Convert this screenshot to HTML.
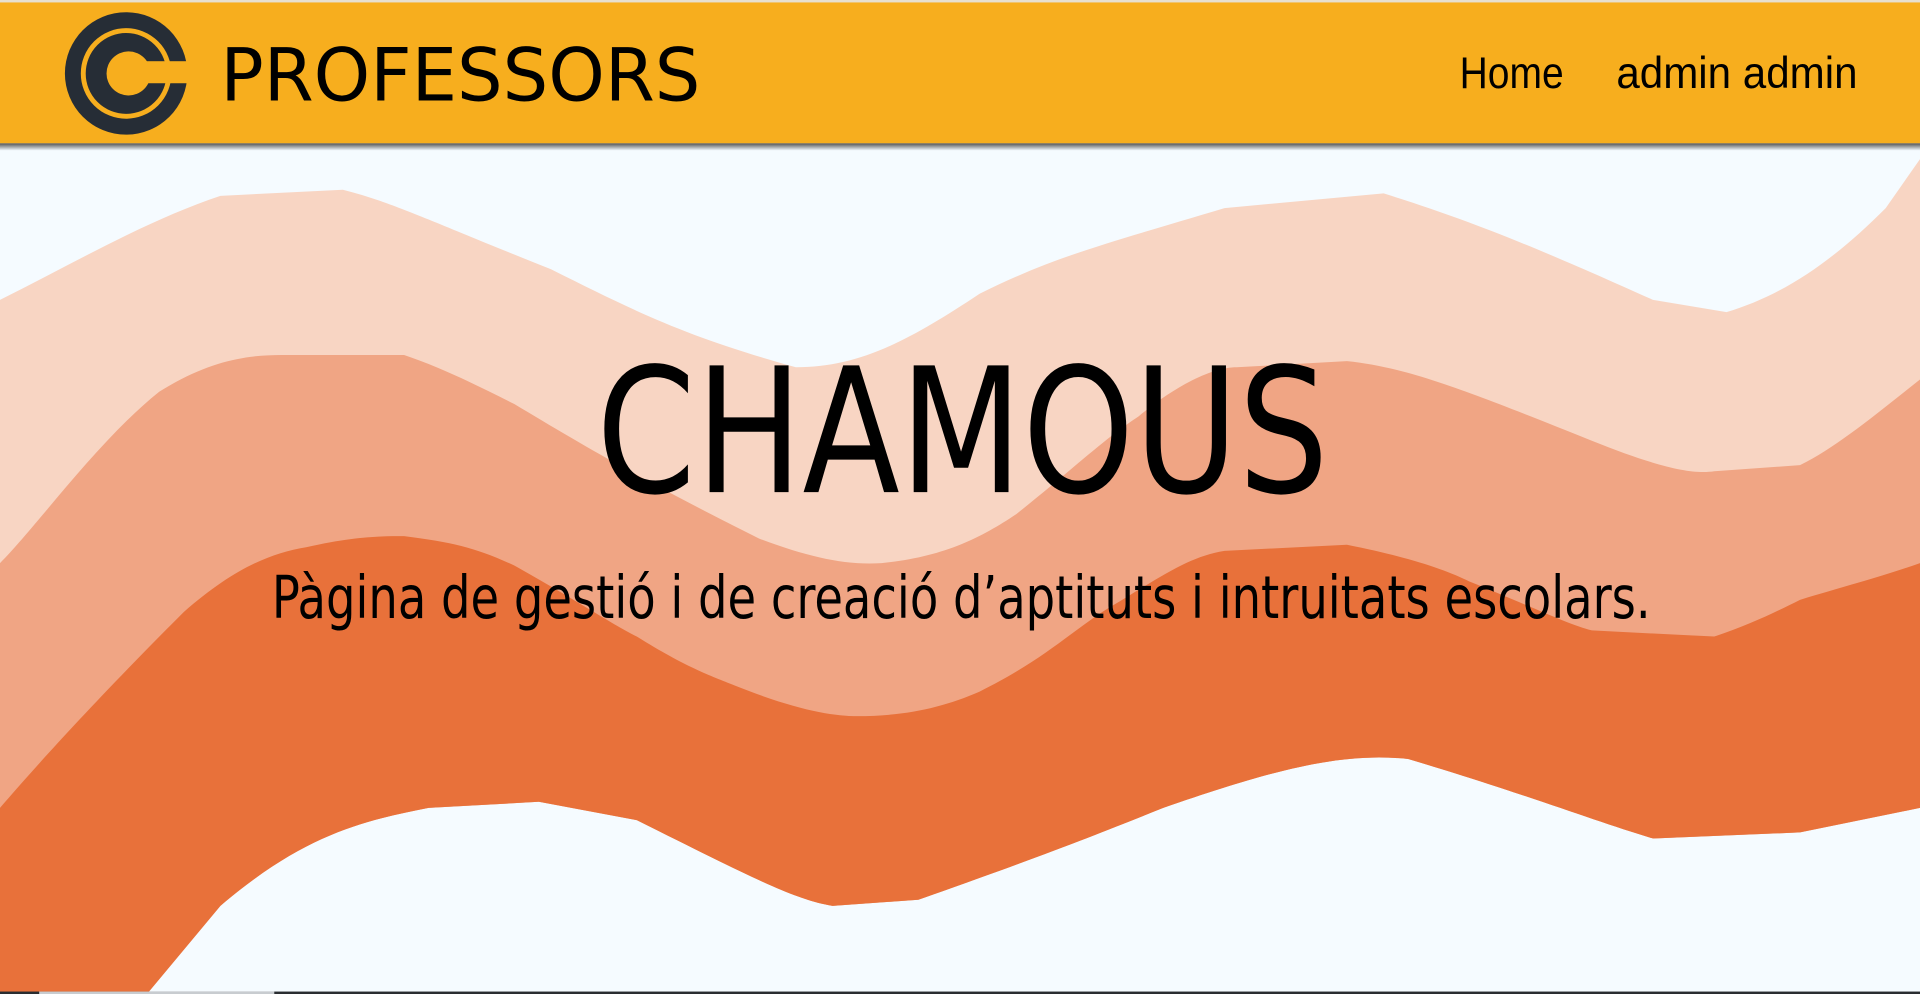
<!DOCTYPE html>
<html><head><meta charset="utf-8"><style>
html,body{margin:0;padding:0;width:1920px;height:994px;overflow:hidden;background:#F5FBFF}
svg{display:block}
</style></head><body>
<svg width="1920" height="994" viewBox="0 0 1568 812" preserveAspectRatio="none" xmlns="http://www.w3.org/2000/svg">
<defs>
<linearGradient id="sh" x1="0" y1="0" x2="0" y2="1"><stop offset="0" stop-color="#333" stop-opacity=".85"/><stop offset="1" stop-color="#333" stop-opacity="0"/></linearGradient>
</defs>
<rect width="1568" height="812" fill="#F5FBFF"/>
<path fill="#F8D5C3" d="M0,245 C60,215 120,180 180,160 L280,155 C320,165 350,180 450,220 C520,255 560,275 650,300 C700,300 740,280 800,240 C860,210 900,200 1000,170 L1130,158 C1200,180 1250,200 1350,245 L1410,255 C1460,240 1500,210 1540,170 L1568,130 L1568,660 L1470,680 L1350,685 C1300,670 1250,650 1150,620 C1100,615 1050,625 950,660 C900,680 850,700 750,735 L680,740 C650,735 620,720 520,670 L440,655 L350,660 C300,670 250,680 180,740 L120,812 L0,812 Z"/>
<path fill="#F0A584" d="M0,460 C30,430 80,360 130,320 C170,295 200,290 230,290 L330,290 C360,300 390,315 420,330 C470,360 520,390 620,440 C660,455 690,462 720,460 C770,455 800,440 830,420 C880,380 900,360 930,340 C960,315 990,300 1010,300 L1100,295 C1150,300 1200,320 1300,360 C1350,380 1380,388 1400,385 L1470,380 C1500,365 1530,340 1568,310 L1568,660 L1470,680 L1350,685 C1300,670 1250,650 1150,620 C1100,615 1050,625 950,660 C900,680 850,700 750,735 L680,740 C650,735 620,720 520,670 L440,655 L350,660 C300,670 250,680 180,740 L120,812 L0,812 Z"/>
<path fill="#E8713A" d="M0,660 C30,625 80,570 150,500 C190,465 220,452 250,447 C290,438 310,438 330,438 C370,443 390,448 420,462 C470,490 500,510 520,520 C560,545 580,552 600,560 C650,580 680,585 700,585 C740,585 770,578 800,565 C850,540 870,520 900,500 C950,470 970,455 1000,450 L1100,445 C1150,455 1180,465 1200,475 C1250,495 1280,510 1300,515 L1400,520 C1430,510 1450,500 1470,490 C1510,478 1540,470 1568,460 L1568,660 L1470,680 L1350,685 C1300,670 1250,650 1150,620 C1100,615 1050,625 950,660 C900,680 850,700 750,735 L680,740 C650,735 620,720 520,670 L440,655 L350,660 C300,670 250,680 180,740 L120,812 L0,812 Z"/>
<rect x="0" y="810" width="1568" height="2" fill="#2a2d31"/>
<rect x="32" y="810" width="192" height="2" fill="#c8ccd0"/>
<rect x="0" y="117" width="1568" height="6" fill="url(#sh)"/>
<rect x="0" y="0" width="1568" height="117" fill="#F7AE1E"/>
<rect x="0" y="0" width="1568" height="2" fill="#e8e0d0"/>
<circle cx="103" cy="60" r="50" fill="#262D36"/>
<circle cx="103" cy="60" r="35" fill="none" stroke="#F7AE1E" stroke-width="4"/>
<circle cx="105" cy="60" r="18" fill="#F7AE1E"/>
<rect x="108" y="50" width="50" height="18" fill="#F7AE1E"/>
<text x="180" y="82" font-family="'DejaVu Sans Condensed','DejaVu Sans',sans-serif" font-size="60" textLength="392" lengthAdjust="spacingAndGlyphs" fill="#000">PROFESSORS</text>
<text x="1192" y="72" font-family="'Liberation Sans',sans-serif" font-size="36" textLength="85" lengthAdjust="spacingAndGlyphs" fill="#000">Home</text>
<text x="1320" y="72" font-family="'Liberation Sans',sans-serif" font-size="36" textLength="197" lengthAdjust="spacingAndGlyphs" fill="#000">admin admin</text>
<text x="487" y="402" font-family="'DejaVu Sans Condensed','DejaVu Sans',sans-serif" font-size="142" textLength="598" lengthAdjust="spacingAndGlyphs" fill="#000">CHAMOUS</text>
<text x="222" y="505" font-family="'DejaVu Sans Condensed','DejaVu Sans',sans-serif" font-size="48" textLength="1126" lengthAdjust="spacingAndGlyphs" fill="#000">Pàgina de gestió i de creació d’aptituts i intruitats escolars.</text>
</svg>
</body></html>
